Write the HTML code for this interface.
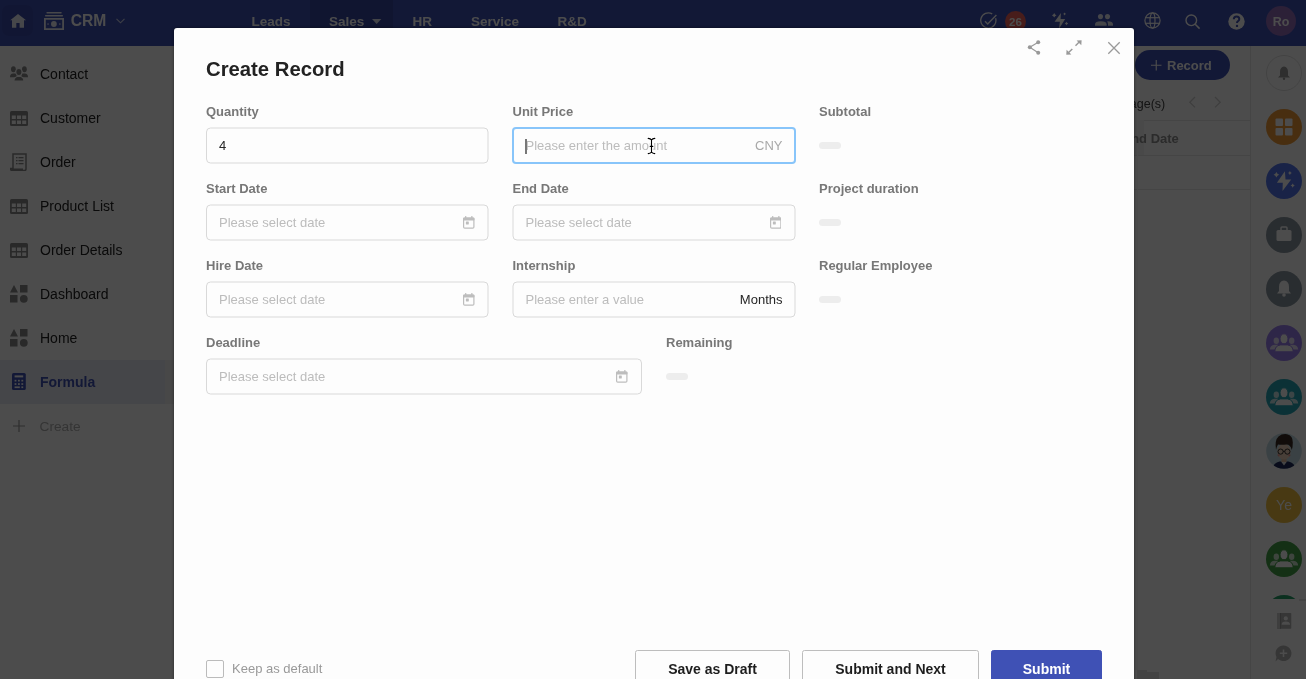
<!DOCTYPE html>
<html><head><meta charset="utf-8">
<style>
*{box-sizing:border-box;margin:0;padding:0}
html,body{width:1306px;height:679px;overflow:hidden;background:#fff;font-family:"Liberation Sans",sans-serif;position:relative}
.a{position:absolute;white-space:nowrap}
#hdr{position:absolute;left:0;top:0;width:1306px;height:46px;background:#3f51b5}
.nav{position:absolute;top:12.5px;font-size:13.5px;font-weight:bold;color:#fff;line-height:18px}
.side{position:absolute;left:40px;font-size:14px;color:#222;line-height:20px}
#mask{position:absolute;left:0;top:0;width:1306px;height:679px;background:rgba(0,0,0,0.7)}
#modal{will-change:transform;position:absolute;left:174px;top:28px;width:960px;height:700px;background:#fdfdfd;border-radius:3px;box-shadow:0 0 3px rgba(0,0,0,0.5)}
.lbl{position:absolute;font-size:13px;font-weight:bold;color:#777;line-height:16px}
.box{position:absolute;height:36px;border:1px solid transparent;border-radius:4px}
.ph{position:absolute;left:12px;top:0;line-height:34px;font-size:13px;color:#bcbcbc}
.pill{position:absolute;width:22px;height:7px;border-radius:4px;background:#ededed}
.cal{position:absolute;right:13.5px;top:9.5px;width:11.5px;height:13px}
.circ{position:absolute;left:1266px;width:36px;height:36px;border-radius:50%}
.btn{position:absolute;top:622px;height:40px;border:1px solid #bdbdbd;border-radius:2.5px;font-size:14px;font-weight:bold;color:#1d1d1d;text-align:center;line-height:36px;background:transparent}
</style></head><body>
<div id="bgw" style="position:absolute;left:0;top:0;width:1306px;height:679px;will-change:transform">
<div id="hdr">
  <div class="a" style="left:2px;top:5px;width:31px;height:31px;border-radius:7px;background:rgba(0,0,0,0.06)"></div>
  <svg class="a" style="left:10px;top:13px" width="17" height="15" viewBox="0 0 17 15"><path d="M8 0.9 L16.1 7.3 L14 7.3 L14 14.8 L9.6 14.8 L9.6 10 L6.3 10 L6.3 14.8 L2 14.8 L2 7.3 L0.2 7.3 Z" fill="#fff" fill-opacity="0.9"/></svg>
  <svg class="a" style="left:44px;top:11px" width="21" height="20" viewBox="0 0 21 20"><g fill="#fff" fill-opacity="0.92"><rect x="2.4" y="1.1" width="15.3" height="1.3" rx="0.6"/><rect x="1" y="4.1" width="18" height="1.3" rx="0.6"/><circle cx="9.9" cy="13" r="2.9"/><rect x="3.4" y="12.4" width="1.3" height="1.3"/><rect x="15.2" y="12.4" width="1.3" height="1.3"/></g><path d="M0.9 7.9 H19.1 V18.1 H0.9Z" fill="none" stroke="#fff" stroke-opacity="0.92" stroke-width="1.8"/></svg>
  <div class="a" style="left:70.8px;top:11.3px;font-size:15.6px;font-weight:bold;color:#fff;line-height:20px">CRM</div>
  <svg class="a" style="left:116px;top:18px" width="9" height="6" viewBox="0 0 9 6"><path d="M0.5 0.8 L4.5 4.8 L8.5 0.8" fill="none" stroke="#fff" stroke-opacity="0.75" stroke-width="1.1"/></svg>
  <div class="a" style="left:310px;top:0;width:83px;height:46px;background:rgba(0,0,0,0.1)"></div>
  <div class="nav" style="left:251.5px">Leads</div>
  <div class="nav" style="left:329px">Sales</div>
  <svg class="a" style="left:372px;top:19.3px" width="10" height="6" viewBox="0 0 10 6"><path d="M0 0 L9.3 0 L4.65 5.1 Z" fill="#fff" fill-opacity="0.85"/></svg>
  <div class="nav" style="left:412.5px">HR</div>
  <div class="nav" style="left:471px">Service</div>
  <div class="nav" style="left:557.5px">R&amp;D</div>
  <svg class="a" style="left:980px;top:12px" width="18" height="18" viewBox="0 0 18 18"><path d="M15.6 6.2 A7.6 7.6 0 1 1 12.2 1.9" fill="none" stroke="#fff" stroke-width="1.3"/><path d="M5 9.3 L7.7 12 L16.4 3" fill="none" stroke="#fff" stroke-width="1.4"/></svg>
  <div class="a" style="left:1005px;top:10.7px;width:21px;height:21px;border-radius:50%;background:#f0625a;color:#fff;font-size:11.5px;font-weight:bold;text-align:center;line-height:23px">26</div>
  <svg class="a" style="left:1050px;top:11px" width="20" height="20" viewBox="0 0 20 20"><path d="M10.9 2 L4.6 10.7 L9.9 10.7 L9 17.8 L15.2 8 L10.6 8 Z" fill="#fff"/><path d="M4.2 2.0 Q4.844 3.6559999999999997 6.5 4.3 Q4.844 4.944 4.2 6.6 Q3.556 4.944 1.9000000000000004 4.3 Q3.556 3.6559999999999997 4.2 2.0Z" fill="#fff"/><path d="M14.6 1.6 Q14.991999999999999 2.608 16.0 3 Q14.991999999999999 3.392 14.6 4.4 Q14.208 3.392 13.2 3 Q14.208 2.608 14.6 1.6Z" fill="#fff"/><path d="M16.5 10.8 Q16.976 12.024 18.2 12.5 Q16.976 12.976 16.5 14.2 Q16.024 12.976 14.8 12.5 Q16.024 12.024 16.5 10.8Z" fill="#fff"/></svg>
  <svg class="a" style="left:1094px;top:13px" width="20" height="13" viewBox="0 0 20 13"><g fill="#fff" fill-opacity="0.88"><circle cx="6.5" cy="3.6" r="2.55"/><circle cx="13.5" cy="3.6" r="2.55"/><path d="M1 12.8 L1 11.3 Q1 8.2 6.8 8.2 Q12.6 8.2 12.6 11.3 L12.6 12.8Z"/><path d="M13.6 8.3 Q19 8.5 19 11.3 L19 12.8 L14 12.8 L14 11.3 Q14 9.6 13.2 8.5Z"/></g></svg>
  <svg class="a" style="left:1143.5px;top:11.5px" width="17" height="17" viewBox="0 0 17 17"><g fill="none" stroke="#fff" stroke-width="1.2"><circle cx="8.5" cy="8.5" r="7.6"/><ellipse cx="8.5" cy="8.5" rx="2.5" ry="7.6"/><line x1="1.5" y1="5.7" x2="15.5" y2="5.7"/><line x1="1.5" y1="11.3" x2="15.5" y2="11.3"/></g></svg>
  <svg class="a" style="left:1185px;top:14px" width="16" height="16" viewBox="0 0 16 16"><circle cx="6.3" cy="6.3" r="5.3" fill="none" stroke="#fff" stroke-width="1.4"/><line x1="10.2" y1="10.2" x2="14.6" y2="14.6" stroke="#fff" stroke-width="1.5"/></svg>
  <svg class="a" style="left:1227.5px;top:12.7px" width="17" height="17" viewBox="0 0 17 17"><circle cx="8.5" cy="8.5" r="8.2" fill="#fff"/><path d="M5.8 6.3 Q5.8 3.5 8.6 3.5 Q11.3 3.5 11.3 6 Q11.3 7.5 9.8 8.3 Q9 8.8 9 10" fill="none" stroke="#3f51b5" stroke-width="2"/><circle cx="9" cy="12.9" r="1.2" fill="#3f51b5"/></svg>
  <div class="a" style="left:1266px;top:6px;width:30px;height:30px;border-radius:50%;background:#946cba;color:#fff;font-size:12.5px;font-weight:bold;text-align:center;line-height:32px">Ro</div>
</div>

<div class="a" style="left:0;top:360px;width:174px;height:44px;background:#f0f0f0"></div>
<div class="a" style="left:0;top:360px;width:165px;height:44px;background:#e8eaf6"></div>
<svg class="a" style="left:10px;top:66.3px" width="18" height="15" viewBox="0 0 18 15"><g fill="#8a8a8a"><ellipse cx="3.4" cy="3.2" rx="2.4" ry="3"/><path d="M0 11.2 Q0 7.8 3.2 7.6 L6.2 7.6 L6.8 11.2Z"/><ellipse cx="14.4" cy="3.2" rx="2.4" ry="3"/><path d="M18 11.2 Q18 7.8 14.8 7.6 L11.8 7.6 L11.2 11.2Z"/></g><g fill="#8a8a8a" stroke="#fff" stroke-width="1.1"><ellipse cx="8.9" cy="6" rx="3.1" ry="3.5"/><path d="M3.9 15 Q3.9 10.6 8.9 10.3 Q13.9 10.6 13.9 15Z"/></g></svg>
<svg class="a" style="left:10px;top:111px" width="18" height="15" viewBox="0 0 18 15"><rect x="0" y="0" width="18" height="15" rx="1.5" fill="#8a8a8a"/><g fill="#fff"><rect x="1.8" y="4.5" width="4" height="3.5"/><rect x="7" y="4.5" width="4" height="3.5"/><rect x="12.2" y="4.5" width="4" height="3.5"/><rect x="1.8" y="9.5" width="4" height="3.5"/><rect x="7" y="9.5" width="4" height="3.5"/><rect x="12.2" y="9.5" width="4" height="3.5"/></g></svg>
<svg class="a" style="left:10px;top:153px" width="17" height="18" viewBox="0 0 17 18"><path d="M3 1 L16 1 L16 16 Q16 17.5 14.5 17.5 L2 17.5 Q0.5 17.5 0.5 15.5 L3 15.5Z" fill="none" stroke="#8a8a8a" stroke-width="1.5"/><path d="M0.5 15.5 L13 15.5 L13 17.5 L2 17.5Z" fill="#8a8a8a"/><g fill="#8a8a8a"><rect x="6" y="4" width="1.5" height="1.3"/><rect x="8.5" y="4" width="5" height="1.3"/><rect x="6" y="7" width="1.5" height="1.3"/><rect x="8.5" y="7" width="5" height="1.3"/><rect x="6" y="10" width="1.5" height="1.3"/><rect x="8.5" y="10" width="5" height="1.3"/></g></svg>
<svg class="a" style="left:10px;top:199px" width="18" height="15" viewBox="0 0 18 15"><rect x="0" y="0" width="18" height="15" rx="1.5" fill="#8a8a8a"/><g fill="#fff"><rect x="1.8" y="4.5" width="4" height="3.5"/><rect x="7" y="4.5" width="4" height="3.5"/><rect x="12.2" y="4.5" width="4" height="3.5"/><rect x="1.8" y="9.5" width="4" height="3.5"/><rect x="7" y="9.5" width="4" height="3.5"/><rect x="12.2" y="9.5" width="4" height="3.5"/></g></svg>
<svg class="a" style="left:10px;top:243px" width="18" height="15" viewBox="0 0 18 15"><rect x="0" y="0" width="18" height="15" rx="1.5" fill="#8a8a8a"/><g fill="#fff"><rect x="1.8" y="4.5" width="4" height="3.5"/><rect x="7" y="4.5" width="4" height="3.5"/><rect x="12.2" y="4.5" width="4" height="3.5"/><rect x="1.8" y="9.5" width="4" height="3.5"/><rect x="7" y="9.5" width="4" height="3.5"/><rect x="12.2" y="9.5" width="4" height="3.5"/></g></svg>
<svg class="a" style="left:10px;top:285px" width="18" height="18" viewBox="0 0 18 18"><g fill="#8a8a8a"><path d="M4 0 L8 7.5 L0 7.5Z"/><rect x="10" y="0" width="7.5" height="7.5"/><rect x="0" y="10" width="7.5" height="7.5"/><circle cx="13.8" cy="13.8" r="3.9"/></g></svg>
<svg class="a" style="left:10px;top:329px" width="18" height="18" viewBox="0 0 18 18"><g fill="#8a8a8a"><path d="M4 0 L8 7.5 L0 7.5Z"/><rect x="10" y="0" width="7.5" height="7.5"/><rect x="0" y="10" width="7.5" height="7.5"/><circle cx="13.8" cy="13.8" r="3.9"/></g></svg>
<svg class="a" style="left:12.3px;top:373.2px" width="14" height="17" viewBox="0 0 14 17"><rect x="0" y="0" width="13.8" height="17" rx="1.6" fill="#3f51b5"/><g fill="#fff"><rect x="2.6" y="2.4" width="8.6" height="2"/><rect x="2.6" y="6.8" width="1.8" height="1.7"/><rect x="6" y="6.8" width="1.8" height="1.7"/><rect x="9.4" y="6.8" width="1.8" height="1.7"/><rect x="2.6" y="10.2" width="1.8" height="1.7"/><rect x="6" y="10.2" width="1.8" height="1.7"/><rect x="9.4" y="10.2" width="1.8" height="1.7"/><rect x="2.6" y="13.4" width="5.2" height="1.7"/><rect x="9.4" y="13.4" width="1.8" height="1.7"/></g></svg>
<svg class="a" style="left:13px;top:420.3px" width="12" height="12" viewBox="0 0 12 12"><path d="M6 0 V12 M0 6 H12" stroke="#999" stroke-width="1.15"/></svg>
<div class="side" style="top:64px">Contact</div>
<div class="side" style="top:108px">Customer</div>
<div class="side" style="top:152px">Order</div>
<div class="side" style="top:196px">Product List</div>
<div class="side" style="top:240px">Order Details</div>
<div class="side" style="top:284px">Dashboard</div>
<div class="side" style="top:328px">Home</div>
<div class="side" style="top:372px;font-weight:bold;color:#3f51b5">Formula</div>
<div class="side" style="top:417px;left:39.5px;font-size:13.7px;color:#b0b0b0">Create</div>

<div class="a" style="left:1135px;top:50px;width:95px;height:30px;border-radius:15px;background:#3f51b5"></div>
<svg class="a" style="left:1150.5px;top:59.8px" width="11" height="11" viewBox="0 0 11 11"><path d="M5.25 0 V10.5 M0 5.25 H10.5" stroke="#fff" stroke-width="1.15"/></svg>
<div class="a" style="left:1167px;top:56.5px;font-size:13px;font-weight:bold;color:#fff;line-height:18px">Record</div>
<div class="a" style="left:1121.5px;top:95.3px;font-size:12.5px;color:#444;line-height:18px">Page(s)</div>
<svg class="a" style="left:1188px;top:95.5px" width="8" height="12" viewBox="0 0 8 12"><path d="M7 1 L1.8 6.2 L7 11.4" fill="none" stroke="#d0d0d0" stroke-width="1.3"/></svg>
<svg class="a" style="left:1213.5px;top:95.5px" width="8" height="12" viewBox="0 0 8 12"><path d="M1 1 L6.2 6.2 L1 11.4" fill="none" stroke="#d0d0d0" stroke-width="1.3"/></svg>
<div class="a" style="left:1134px;top:120px;width:116px;height:1px;background:#e8e8e8"></div>
<div class="a" style="left:1134px;top:120px;width:10px;height:35px;background:#f3f3f3"></div>
<div class="a" style="left:1134px;top:155px;width:116px;height:1px;background:#e8e8e8"></div>
<div class="a" style="left:1134px;top:189px;width:116px;height:1px;background:#e8e8e8"></div>
<div class="a" style="left:1122.5px;top:130px;font-size:13px;font-weight:bold;color:#8f8f8f;line-height:18px">End Date</div>
<div class="a" style="left:1250px;top:46px;width:1px;height:633px;background:#e8e8e8"></div>
<div class="a" style="left:1137px;top:670px;width:10px;height:9px;background:#e2e2e2"></div><div class="a" style="left:1147px;top:672px;width:12px;height:7px;background:#e2e2e2"></div><div class="a" style="left:1137px;top:155px;width:1px;height:515px;background:#f4f4f4"></div>

<div class="circ" style="top:55px;border:1px solid #e0e0e0"></div>
<svg class="a" style="left:1278px;top:66px" width="12" height="14" viewBox="0 0 12 14"><path d="M6 0.5 Q10 1 10 6 L10 9.5 L12 11.5 L0 11.5 L2 9.5 L2 6 Q2 1 6 0.5Z" fill="#9a9a9a"/><circle cx="6" cy="12.7" r="1.2" fill="#9a9a9a"/></svg>
<div class="circ" style="top:109px;background:#f09a37"></div>
<svg class="a" style="left:1275px;top:118px" width="18" height="18" viewBox="0 0 18 18"><g fill="#fff"><rect x="0.5" y="0.5" width="7.5" height="7.5" rx="1"/><rect x="10" y="0.5" width="7.5" height="7.5" rx="1"/><rect x="0.5" y="10" width="7.5" height="7.5" rx="1"/><rect x="10" y="10" width="7.5" height="7.5" rx="1"/></g></svg>
<div class="circ" style="top:163px;background:#5577ee"></div>
<svg class="a" style="left:1264px;top:160px" width="40" height="40" viewBox="0 0 40 40"><path d="M20.9 11.3 L12.9 22.7 L18.8 22.7 L18.5 31 L27.2 19.4 L21.5 19.4Z" fill="#fff"/><path d="M12.4 11.899999999999999 Q13.184000000000001 13.915999999999999 15.2 14.7 Q13.184000000000001 15.484 12.4 17.5 Q11.616 15.484 9.600000000000001 14.7 Q11.616 13.915999999999999 12.4 11.899999999999999Z" fill="#fff"/><path d="M25.9 11.1 Q26.432 12.468 27.799999999999997 13 Q26.432 13.532 25.9 14.9 Q25.368 13.532 24.0 13 Q25.368 12.468 25.9 11.1Z" fill="#fff"/><path d="M28.7 23.5 Q29.288 25.012 30.8 25.6 Q29.288 26.188000000000002 28.7 27.700000000000003 Q28.112 26.188000000000002 26.599999999999998 25.6 Q28.112 25.012 28.7 23.5Z" fill="#fff"/></svg>
<div class="circ" style="top:217px;background:#8a96a0"></div>
<svg class="a" style="left:1276px;top:226px" width="16" height="16" viewBox="0 0 16 16"><rect x="0.5" y="4" width="15" height="11" rx="1.5" fill="#fff"/><path d="M5 4 V2 Q5 1 6 1 H10 Q11 1 11 2 V4" fill="none" stroke="#fff" stroke-width="1.5"/></svg>
<div class="circ" style="top:271px;background:#8a96a0"></div>
<svg class="a" style="left:1277px;top:280px" width="14" height="17" viewBox="0 0 14 17"><path d="M7 0.5 Q12 1 12 7 L12 11 L14 13.5 L0 13.5 L2 11 L2 7 Q2 1 7 0.5Z" fill="#fff"/><circle cx="7" cy="15" r="1.8" fill="#fff"/></svg>
<div class="circ" style="top:325px;background:#9c7ff0"></div>
<svg class="a" style="left:1266px;top:325px" width="36" height="36" viewBox="0 0 36 36"><g fill="#fff" opacity="0.75"><ellipse cx="10.3" cy="15.8" rx="2.7" ry="3.3"/><path d="M3.8 24.6 Q4 20.3 8.5 19.8 L12 19.8 L13 24.6Z"/><ellipse cx="25.7" cy="15.8" rx="2.7" ry="3.3"/><path d="M32.2 24.6 Q32 20.3 27.5 19.8 L24 19.8 L23 24.6Z"/></g><g fill="#fff" stroke="#9c7ff0" stroke-width="1"><ellipse cx="18" cy="13.8" rx="4" ry="5"/><path d="M8.8 26.8 Q8.8 20.6 14.5 19.9 L21.5 19.9 Q27.2 20.6 27.2 26.8Z"/></g></svg>
<div class="circ" style="top:379px;background:#26a6b5"></div>
<svg class="a" style="left:1266px;top:379px" width="36" height="36" viewBox="0 0 36 36"><g fill="#fff" opacity="0.75"><ellipse cx="10.3" cy="15.8" rx="2.7" ry="3.3"/><path d="M3.8 24.6 Q4 20.3 8.5 19.8 L12 19.8 L13 24.6Z"/><ellipse cx="25.7" cy="15.8" rx="2.7" ry="3.3"/><path d="M32.2 24.6 Q32 20.3 27.5 19.8 L24 19.8 L23 24.6Z"/></g><g fill="#fff" stroke="#26a6b5" stroke-width="1"><ellipse cx="18" cy="13.8" rx="4" ry="5"/><path d="M8.8 26.8 Q8.8 20.6 14.5 19.9 L21.5 19.9 Q27.2 20.6 27.2 26.8Z"/></g></svg>
<svg class="a" style="left:1266px;top:433px" width="36" height="36" viewBox="0 0 36 36"><defs><clipPath id="av"><circle cx="18" cy="18" r="17.8"/></clipPath></defs><g clip-path="url(#av)"><rect width="36" height="36" fill="#c2dbe3"/><path d="M6 37 Q7 30 13.5 28.5 L22.5 28.5 Q29 30 30 37Z" fill="#1e2a5a"/><path d="M15 28.5 L18 32.5 L21 28.5Z" fill="#e8e8e8"/><rect x="15.5" y="24" width="5" height="5" fill="#e6c0a2"/><ellipse cx="18" cy="18.8" rx="6.6" ry="7.8" fill="#f2d3bb"/><path d="M10 17 Q8.5 7 12.5 3.5 Q16 0.5 21 1.2 Q27 2.5 26.8 9.5 Q26.8 14 25.8 17 Q24.5 11.5 20.5 11.5 Q15.5 12 12 11.5 Q10.8 13.5 10 17Z" fill="#3a2a22"/><g fill="none" stroke="#222" stroke-width="0.9"><circle cx="14.6" cy="18.6" r="2.6"/><circle cx="21.4" cy="18.6" r="2.6"/><path d="M17.2 18.4 H18.8"/></g><circle cx="12.6" cy="22.3" r="1.1" fill="#ef7d7d" fill-opacity="0.7"/><circle cx="23.4" cy="22.3" r="1.1" fill="#ef7d7d" fill-opacity="0.7"/></g></svg>
<div class="circ" style="top:487px;background:#f0c040;color:#fff;font-size:14px;text-align:center;line-height:36px">Ye</div>
<div class="circ" style="top:541px;background:#43a047"></div>
<svg class="a" style="left:1266px;top:541px" width="36" height="36" viewBox="0 0 36 36"><g fill="#fff" opacity="0.75"><ellipse cx="10.3" cy="15.8" rx="2.7" ry="3.3"/><path d="M3.8 24.6 Q4 20.3 8.5 19.8 L12 19.8 L13 24.6Z"/><ellipse cx="25.7" cy="15.8" rx="2.7" ry="3.3"/><path d="M32.2 24.6 Q32 20.3 27.5 19.8 L24 19.8 L23 24.6Z"/></g><g fill="#fff" stroke="#43a047" stroke-width="1"><ellipse cx="18" cy="13.8" rx="4" ry="5"/><path d="M8.8 26.8 Q8.8 20.6 14.5 19.9 L21.5 19.9 Q27.2 20.6 27.2 26.8Z"/></g></svg>
<div class="a" style="left:1251px;top:595px;width:55px;height:4px;overflow:hidden"><div style="position:absolute;left:15px;top:0;width:36px;height:36px;border-radius:50%;background:#26a06a"></div></div>
<div class="a" style="left:1299px;top:599px;width:7px;height:1.5px;background:#e4e4e4"></div>
<svg class="a" style="left:1276.5px;top:613px" width="15" height="16" viewBox="0 0 15 16"><rect x="0" y="0" width="14.3" height="15.8" rx="0.8" fill="#b4b4b4"/><rect x="0" y="0" width="3.2" height="15.8" fill="#cfcfcf"/><rect x="3.2" y="0" width="0.8" height="15.8" fill="#999"/><circle cx="8.8" cy="5.4" r="2.1" fill="#fff"/><path d="M4.6 11.8 Q4.6 8.6 8.8 8.6 Q13 8.6 13 11.8Z" fill="#fff"/></svg>
<svg class="a" style="left:1275px;top:645px" width="17" height="17" viewBox="0 0 17 17"><path d="M8.5 0.5 A8 7.8 0 1 1 3 14 L0.5 16.5 L1.5 12 A8 7.8 0 0 1 8.5 0.5Z" fill="#b4b4b4"/><path d="M8.5 4.5 V12 M4.8 8.3 H12.2" stroke="#fff" stroke-width="1.6"/></svg>

</div>
<!-- MASK -->
<div id="mask"></div>

<div id="modal">
<svg class="a" style="left:0;top:0" width="960" height="651" viewBox="0 0 960 651"><g fill="none" stroke="#d9d9d9" stroke-width="1"><rect x="32.5" y="177" width="281.5" height="35" rx="4"/><rect x="339" y="177" width="282" height="35" rx="4"/><rect x="32.5" y="100" width="281.5" height="35" rx="4"/><rect x="32.5" y="254" width="281.5" height="35" rx="4"/><rect x="339" y="254" width="282" height="35" rx="4"/><rect x="32.5" y="331" width="435" height="35" rx="4"/></g><rect x="339" y="100" width="282" height="35" rx="3" fill="none" stroke="#88c5fa" stroke-width="2"/></svg>
  <div class="a" style="left:32px;top:28.5px;font-size:20.3px;font-weight:bold;color:#222;line-height:24px">Create Record</div>
  <svg class="a" style="left:853px;top:12px" width="14" height="15" viewBox="0 0 14 15"><g fill="#999"><circle cx="2.8" cy="7.3" r="2"/><circle cx="11.2" cy="2.3" r="2"/><circle cx="11.2" cy="12.8" r="2"/></g><path d="M2.8 7.3 L11.2 2.3 M2.8 7.3 L11.2 12.8" stroke="#999" stroke-width="1.2"/></svg>
  <svg class="a" style="left:891px;top:11px" width="18" height="18" viewBox="0 0 18 18"><g fill="#999"><path d="M16.6 1.2 L11.6 1.5 L16.3 6.2Z"/><path d="M1.3 15.8 L1.6 10.8 L6.3 15.5Z"/></g><path d="M10.5 6.8 L14.2 3.1 M7.3 9.9 L3.6 13.6" stroke="#999" stroke-width="1.4"/></svg>
  <svg class="a" style="left:933px;top:13px" width="14" height="14" viewBox="0 0 14 14"><path d="M1.3 1.3 L12.7 12.7 M12.7 1.3 L1.3 12.7" stroke="#999" stroke-width="1.3"/></svg>
  <div class="lbl" style="left:32px;top:76px">Quantity</div>
  <div class="box" style="left:32px;top:100px;width:283px"><div class="ph" style="color:#262626">4</div></div>
  <div class="lbl" style="left:338.5px;top:76px">Unit Price</div>
  <div class="box" style="left:338.5px;top:100px;width:283px;">
    <div class="ph">Please enter the amount</div>
    <div class="a" style="right:12px;top:0;line-height:34px;font-size:13px;color:#a8a8a8">CNY</div>
    <div class="a" style="left:11.5px;top:9.5px;width:2px;height:15px;background:#777"></div>
  </div>
  <div class="lbl" style="left:645px;top:76px">Subtotal</div>
  <div class="pill" style="left:645px;top:114px"></div>
  <div class="lbl" style="left:32px;top:153px">Start Date</div>
  <div class="box" style="left:32px;top:177px;width:283px"><div class="ph">Please select date</div><svg class="cal" viewBox="0 0 11.5 13"><rect x="0.6" y="2" width="10.3" height="10.2" rx="1.2" fill="none" stroke="#bdbdbd" stroke-width="1.2"/><rect x="0" y="1.5" width="11.5" height="3" rx="1" fill="#bdbdbd"/><rect x="2" y="0" width="1.3" height="2.5" rx="0.5" fill="#bdbdbd"/><rect x="8.2" y="0" width="1.3" height="2.5" rx="0.5" fill="#bdbdbd"/><rect x="2.9" y="5.5" width="2.9" height="2.9" rx="0.4" fill="#bdbdbd"/></svg></div>
  <div class="lbl" style="left:338.5px;top:153px">End Date</div>
  <div class="box" style="left:338.5px;top:177px;width:283px"><div class="ph">Please select date</div><svg class="cal" viewBox="0 0 11.5 13"><rect x="0.6" y="2" width="10.3" height="10.2" rx="1.2" fill="none" stroke="#bdbdbd" stroke-width="1.2"/><rect x="0" y="1.5" width="11.5" height="3" rx="1" fill="#bdbdbd"/><rect x="2" y="0" width="1.3" height="2.5" rx="0.5" fill="#bdbdbd"/><rect x="8.2" y="0" width="1.3" height="2.5" rx="0.5" fill="#bdbdbd"/><rect x="2.9" y="5.5" width="2.9" height="2.9" rx="0.4" fill="#bdbdbd"/></svg></div>
  <div class="lbl" style="left:645px;top:153px">Project duration</div>
  <div class="pill" style="left:645px;top:191px"></div>
  <div class="lbl" style="left:32px;top:230px">Hire Date</div>
  <div class="box" style="left:32px;top:254px;width:283px"><div class="ph">Please select date</div><svg class="cal" viewBox="0 0 11.5 13"><rect x="0.6" y="2" width="10.3" height="10.2" rx="1.2" fill="none" stroke="#bdbdbd" stroke-width="1.2"/><rect x="0" y="1.5" width="11.5" height="3" rx="1" fill="#bdbdbd"/><rect x="2" y="0" width="1.3" height="2.5" rx="0.5" fill="#bdbdbd"/><rect x="8.2" y="0" width="1.3" height="2.5" rx="0.5" fill="#bdbdbd"/><rect x="2.9" y="5.5" width="2.9" height="2.9" rx="0.4" fill="#bdbdbd"/></svg></div>
  <div class="lbl" style="left:338.5px;top:230px">Internship</div>
  <div class="box" style="left:338.5px;top:254px;width:283px"><div class="ph">Please enter a value</div>
    <div class="a" style="right:12px;top:0;line-height:34px;font-size:13px;color:#262626">Months</div></div>
  <div class="lbl" style="left:645px;top:230px">Regular Employee</div>
  <div class="pill" style="left:645px;top:268px"></div>
  <div class="lbl" style="left:32px;top:307px">Deadline</div>
  <div class="box" style="left:32px;top:331px;width:436px"><div class="ph">Please select date</div><svg class="cal" viewBox="0 0 11.5 13"><rect x="0.6" y="2" width="10.3" height="10.2" rx="1.2" fill="none" stroke="#bdbdbd" stroke-width="1.2"/><rect x="0" y="1.5" width="11.5" height="3" rx="1" fill="#bdbdbd"/><rect x="2" y="0" width="1.3" height="2.5" rx="0.5" fill="#bdbdbd"/><rect x="8.2" y="0" width="1.3" height="2.5" rx="0.5" fill="#bdbdbd"/><rect x="2.9" y="5.5" width="2.9" height="2.9" rx="0.4" fill="#bdbdbd"/></svg></div>
  <div class="lbl" style="left:492px;top:307px">Remaining</div>
  <div class="pill" style="left:492px;top:345px"></div>
  <svg class="a" style="left:466px;top:106px" width="22" height="24" viewBox="0 0 22 24"><path d="M11.5 5.6 V18.4 M8.2 4.4 Q10.6 4.5 11.5 6 Q12.4 4.5 14.8 4.4 M8.2 19.6 Q10.6 19.5 11.5 18 Q12.4 19.5 14.8 19.6 M10.2 12.4 H12.8" fill="none" stroke="#fff" stroke-width="2.6" stroke-linecap="round"/><path d="M11.5 5.6 V18.4 M8.2 4.4 Q10.6 4.5 11.5 6 Q12.4 4.5 14.8 4.4 M8.2 19.6 Q10.6 19.5 11.5 18 Q12.4 19.5 14.8 19.6 M10.2 12.4 H12.8" fill="none" stroke="#000" stroke-width="1.1" stroke-linecap="round"/></svg>
  <div class="a" style="left:32px;top:632px;width:18px;height:18px;border:1px solid #bbb;border-radius:2px"></div>
  <div class="a" style="left:58px;top:632px;font-size:13px;color:#999;line-height:18px">Keep as default</div>
  <div class="btn" style="left:461px;width:155px">Save as Draft</div>
  <div class="btn" style="left:628px;width:177px">Submit and Next</div>
  <div class="btn" style="left:817px;width:111px;background:#3f51b5;border-color:#3f51b5;color:#fff">Submit</div>
</div>

</body></html>
